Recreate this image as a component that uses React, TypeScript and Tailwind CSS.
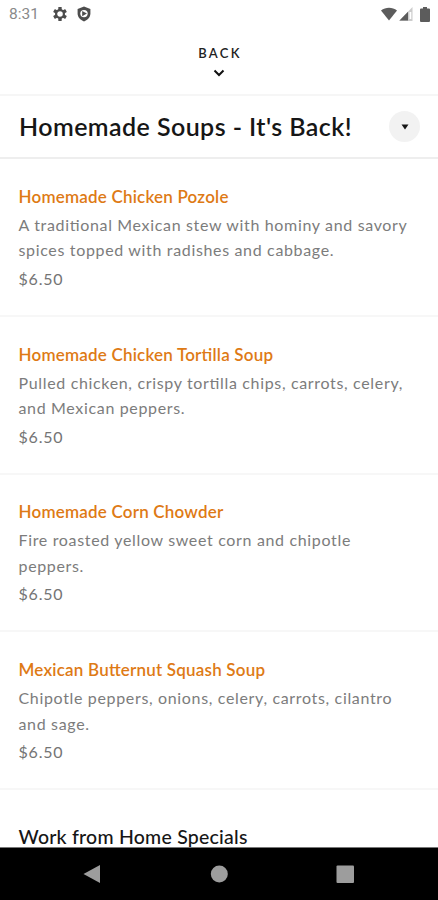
interface MenuItem {
  name: string;
  lines: string[];
  price: string;
}

const soups: MenuItem[] = [
  {
    name: 'Homemade Chicken Pozole',
    lines: ['A traditional Mexican stew with hominy and savory', 'spices topped with radishes and cabbage.'],
    price: '$6.50',
  },
  {
    name: 'Homemade Chicken Tortilla Soup',
    lines: ['Pulled chicken, crispy tortilla chips, carrots, celery,', 'and Mexican peppers.'],
    price: '$6.50',
  },
  {
    name: 'Homemade Corn Chowder',
    lines: ['Fire roasted yellow sweet corn and chipotle', 'peppers.'],
    price: '$6.50',
  },
  {
    name: 'Mexican Butternut Squash Soup',
    lines: ['Chipotle peppers, onions, celery, carrots, cilantro', 'and sage.'],
    price: '$6.50',
  },
];

const StatusBar = () => (
  <div className="flex h-7 shrink-0 items-center justify-between pl-[9px] pr-2">
    <div className="flex items-center">
      <span className="w-[43px] pt-px font-['Roboto',sans-serif] text-[15.5px] leading-none text-[#8a8a8a]">8:31</span>
      <svg width="16" height="16" viewBox="0 0 16 16">
        <g fill="#4d4d4d">
          <rect x="6.3" y="1" width="3.4" height="14" rx=".6" />
          <rect x="6.3" y="1" width="3.4" height="14" rx=".6" transform="rotate(60 8 8)" />
          <rect x="6.3" y="1" width="3.4" height="14" rx=".6" transform="rotate(120 8 8)" />
        </g>
        <circle cx="8" cy="8" r="3.9" fill="#fff" stroke="#4d4d4d" strokeWidth="2.2" />
      </svg>
      <svg className="ml-2" width="16" height="16" viewBox="0 0 16 16">
        <path d="M8 .6 14.4 3v4.6c0 3.6-2.6 6.5-6.4 7.8C4.2 14.1 1.6 11.2 1.6 7.6V3z" fill="#4d4d4d" />
        <circle cx="8" cy="7.6" r="3.7" fill="#fff" />
        <path d="M6.2 4.9v5.4l4.7-2.7z" fill="#4d4d4d" />
      </svg>
    </div>
    <div className="flex items-center">
      <svg width="16" height="14" viewBox="0 0 16 14">
        <path d="M0 3.6C4.6-.2 11.4-.2 16 3.6L8 13.4z" fill="#5c5c5c" />
      </svg>
      <svg className="ml-[2px]" width="14" height="14" viewBox="0 0 14 14">
        <path d="M13.5 0v14H0z" fill="#ccc" />
        <path d="M9 4.8V13.5H.5z" fill="#5c5c5c" />
        <path d="M10.5 5h1.8v7h-1.8z" fill="#fff" />
      </svg>
      <svg className="ml-[7px]" width="10" height="15" viewBox="0 0 10 15">
        <path d="M3 0h4v1.5h2q1 0 1 1V14q0 1-1 1H1q-1 0-1-1V2.5q0-1 1-1h2z" fill="#5c5c5c" />
      </svg>
    </div>
  </div>
);

const MenuRow = ({ name, lines, price }: MenuItem) => (
  <li className="h-[157.75px] border-b-2 border-[#f7f7f7] pl-[18.5px] pt-[25.8px]">
    <h3 className="text-[17px] font-semibold leading-6 tracking-[0.2px] text-[#de7a15]">{name}</h3>
    <p className="mt-[3px] whitespace-nowrap text-base leading-[25.5px] tracking-[0.66px] text-[#7c7c7c]">
      {lines.map((line) => (
        <span key={line} className="block">{line}</span>
      ))}
    </p>
    <p className="mt-[3px] text-base leading-[25px] tracking-[0.8px] text-[#747474]">{price}</p>
  </li>
);

const App = () => {
  return (
    <div className="flex h-[900px] w-[438px] flex-col overflow-hidden bg-white font-['Lato',sans-serif] [font-feature-settings:'liga']">
      <StatusBar />

      <button className="flex h-[68px] shrink-0 flex-col items-center border-b-2 border-[#f6f6f6] pt-[16px] text-[#222]">
        <span className="pl-[2px] text-[13px] font-semibold leading-[18px] tracking-[2.3px]">BACK</span>
        <svg className="mt-[7px]" width="12" height="8" viewBox="0 0 12 8">
          <path d="M1.5 1.5 6 6l4.5-4.5" fill="none" stroke="#111" strokeWidth="2" />
        </svg>
      </button>

      <header className="flex h-[63px] shrink-0 items-center justify-between border-b-2 border-[#eee] pl-[19px] pr-[18px]">
        <h1 className="whitespace-nowrap pb-px text-[25px] font-semibold leading-8 tracking-[0.43px] text-[#161616]">
          Homemade Soups - It's Back!
        </h1>
        <button className="flex size-[31px] items-center justify-center rounded-full bg-[#f2f2f2]">
          <svg className="ml-px" width="8" height="6" viewBox="0 0 8 6">
            <path d="M.5.5h7L4 5.5z" fill="#161616" />
          </svg>
        </button>
      </header>

      <main className="min-h-0 flex-1 overflow-hidden">
        <ul>
          {soups.map((item) => (
            <MenuRow key={item.name} {...item} />
          ))}
        </ul>
        <h2 className="pl-[18.5px] pt-[35px] text-[19.5px] font-medium leading-6 tracking-[0.23px] text-[#161616]">
          Work from Home Specials
        </h2>
      </main>

      <nav className="h-[53px] shrink-0 border-t border-[#777] bg-black">
        <svg width="438" height="52" viewBox="0 0 438 52">
          <g fill="#9d9d9d">
            <path d="M100 17v18L83.5 26z" />
            <circle cx="219.3" cy="26" r="8.5" />
            <rect x="336.5" y="17.5" width="17.5" height="17.5" rx="1" />
          </g>
        </svg>
      </nav>
    </div>
  );
};

export default App;
